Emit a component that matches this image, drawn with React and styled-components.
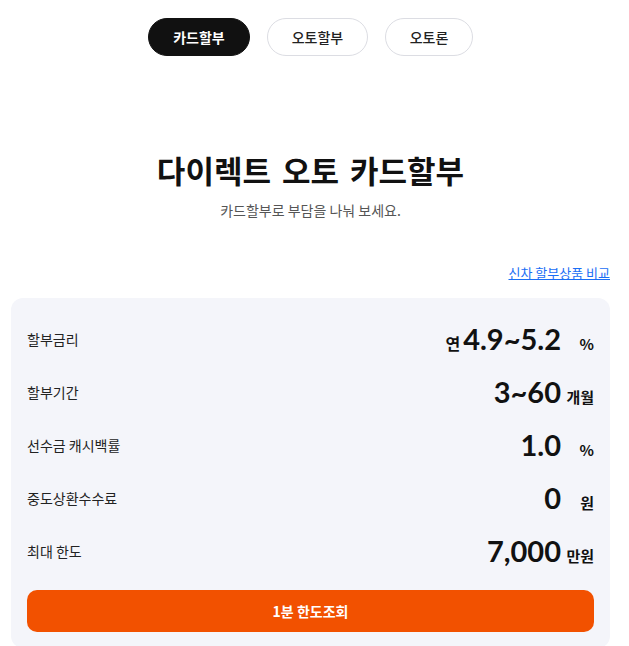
import React, { useState } from "react";
import styled, { createGlobalStyle } from "styled-components";

const GlobalStyle = createGlobalStyle`
  body {
    margin: 0;
    background: #ffffff;
    font-family: "Lato", "Noto Sans CJK KR", sans-serif;
    color: #111;
  }
`;

const Page = styled.div`
  padding: 18px 19px 0 11px;
  display: flex;
  flex-direction: column;
`;

const TabBar = styled.div`
  display: flex;
  justify-content: center;
  gap: 17px;
`;

const Tab = styled.button`
  height: 38px;
  min-width: ${(props) => props.width}px;
  border-radius: 19px;
  border: 1px solid ${(props) => (props.active ? "#111" : "#dcdde3")};
  background-color: ${(props) => (props.active ? "#111" : "#fff")};
  color: ${(props) => (props.active ? "#fff" : "#222")};
  font-family: "Noto Sans CJK KR", sans-serif;
  font-size: 14px;
  font-weight: ${(props) => (props.active ? 700 : 500)};
  cursor: pointer;
`;

const Hero = styled.div`
  margin-top: 94px;
  display: flex;
  flex-direction: column;
  align-items: center;
`;

const Title = styled.h1`
  margin: 0;
  font-family: "Noto Sans CJK KR", sans-serif;
  font-size: 31px;
  font-weight: 700;
  letter-spacing: 0;
  word-spacing: 4px;
  line-height: 40px;
  color: #111;
`;

const Subtitle = styled.p`
  margin: 10px 0 0;
  font-family: "Noto Sans CJK KR", sans-serif;
  font-size: 14px;
  line-height: 20px;
  color: #555;
`;

const LinkRow = styled.div`
  margin-top: 44px;
  display: flex;
  justify-content: flex-end;
`;

const CompareLink = styled.a`
  font-family: "Noto Sans CJK KR", sans-serif;
  font-size: 13px;
  line-height: 18px;
  color: #1a6ef5;
  text-decoration: underline;
  cursor: pointer;
`;

const Card = styled.div`
  margin-top: 16px;
  background-color: #f4f5fa;
  border-radius: 12px;
  padding: 14px 16px 16px;
`;

const Row = styled.div`
  height: 53px;
  display: flex;
  align-items: center;
  justify-content: space-between;
`;

const Label = styled.span`
  font-family: "Noto Sans CJK KR", sans-serif;
  font-size: 14px;
  color: #222;
`;

const Value = styled.div`
  display: flex;
  align-items: baseline;
`;

const Prefix = styled.span`
  font-family: "Noto Sans CJK KR", sans-serif;
  font-size: 16px;
  font-weight: 700;
  margin-right: 3px;
`;

const Number = styled.span`
  font-family: "Lato", sans-serif;
  font-size: 29px;
  font-weight: 700;
  color: #111;
`;

const Unit = styled.span`
  min-width: 28px;
  margin-left: 5px;
  text-align: right;
  font-family: "Noto Sans CJK KR", sans-serif;
  font-size: 15px;
  font-weight: 700;
  color: #111;
`;

const CtaButton = styled.button`
  margin-top: 13px;
  width: 100%;
  height: 42px;
  border: none;
  border-radius: 10px;
  background-color: #f25100;
  color: #fff;
  font-family: "Noto Sans CJK KR", sans-serif;
  font-size: 14px;
  font-weight: 700;
  cursor: pointer;
`;

const tabs = [
  { label: "카드할부", width: 102 },
  { label: "오토할부", width: 101 },
  { label: "오토론", width: 88 },
];

const rows = [
  { label: "할부금리", prefix: "연", value: "4.9~5.2", unit: "%" },
  { label: "할부기간", value: "3~60", unit: "개월" },
  { label: "선수금 캐시백률", value: "1.0", unit: "%" },
  { label: "중도상환수수료", value: "0", unit: "원" },
  { label: "최대 한도", value: "7,000", unit: "만원" },
];

const App = () => {
  const [active, setActive] = useState(0);

  return (
    <>
      <GlobalStyle />
      <Page>
        <TabBar>
          {tabs.map((tab, index) => (
            <Tab
              key={tab.label}
              width={tab.width}
              active={index === active}
              onClick={() => setActive(index)}
            >
              {tab.label}
            </Tab>
          ))}
        </TabBar>
        <Hero>
          <Title>다이렉트 오토 카드할부</Title>
          <Subtitle>카드할부로 부담을 나눠 보세요.</Subtitle>
        </Hero>
        <LinkRow>
          <CompareLink>신차 할부상품 비교</CompareLink>
        </LinkRow>
        <Card>
          {rows.map((row) => (
            <Row key={row.label}>
              <Label>{row.label}</Label>
              <Value>
                {row.prefix && <Prefix>{row.prefix}</Prefix>}
                <Number>{row.value}</Number>
                <Unit>{row.unit}</Unit>
              </Value>
            </Row>
          ))}
          <CtaButton>1분 한도조회</CtaButton>
        </Card>
      </Page>
    </>
  );
};

export default App;
